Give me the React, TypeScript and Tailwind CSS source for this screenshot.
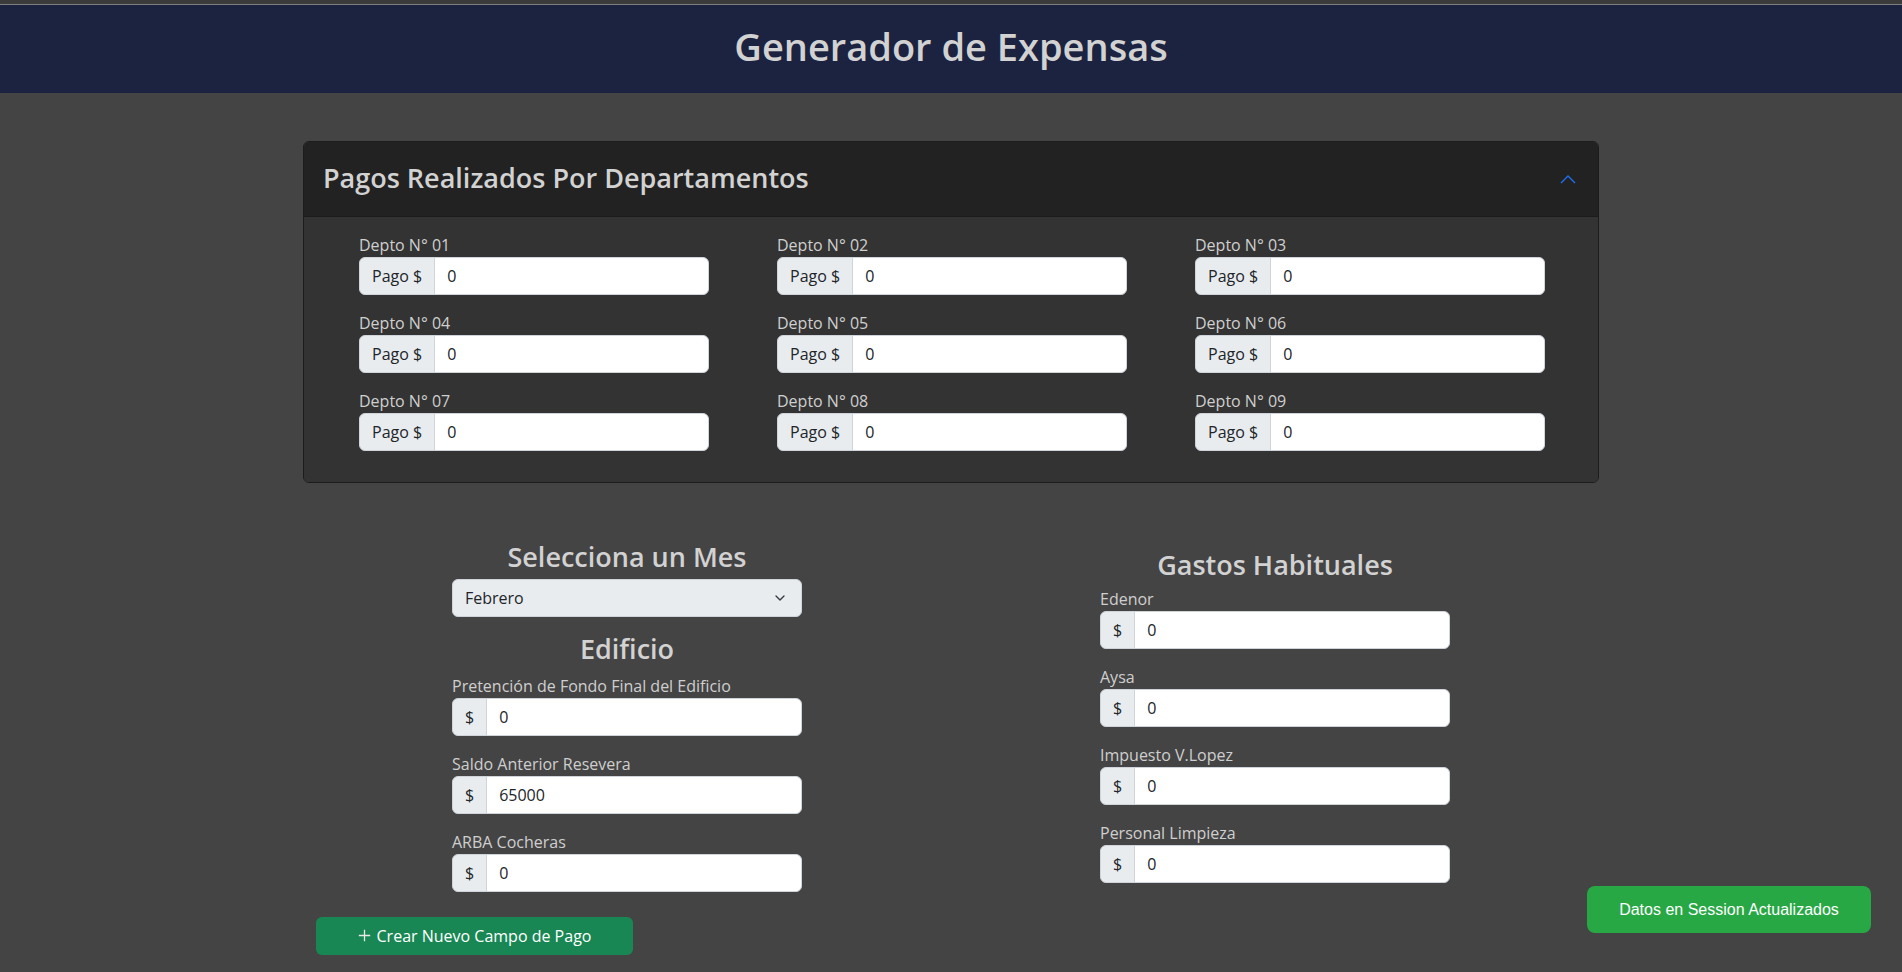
import { ChevronDown } from 'lucide-react';

const deptos = ['01', '02', '03', '04', '05', '06', '07', '08', '09'];

const edificio = [
  { label: 'Pretención de Fondo Final del Edificio', value: '0' },
  { label: 'Saldo Anterior Resevera', value: '65000' },
  { label: 'ARBA Cocheras', value: '0' },
];

const gastos = [
  { label: 'Edenor', value: '0' },
  { label: 'Aysa', value: '0' },
  { label: 'Impuesto V.Lopez', value: '0' },
  { label: 'Personal Limpieza', value: '0' },
];

const MoneyField = ({ label, value, addon }: { label: string; value: string; addon: string }) => {
  return (
    <div>
      <label className="block text-base leading-6 text-[#cfcfcf]">{label}</label>
      <div className="flex h-[38px] w-full">
        <span className="flex items-center px-3 bg-[#e9ecef] border border-[#ced4da] rounded-l-md text-base text-[#212529]">
          {addon}
        </span>
        <input
          readOnly
          value={value}
          className="flex-1 min-w-0 -ml-px px-3 bg-white border border-[#ced4da] rounded-r-md text-base text-[#212529] outline-none"
        />
      </div>
    </div>
  );
};

const App = () => {
  return (
    <div className="min-h-screen bg-[#444444] font-['Open_Sans',sans-serif]">
      <div className="h-[4px] bg-[#3b3b3b]" />
      <div className="h-px bg-[#7d7d7d]" />
      <header className="h-[88px] bg-[#1c2340] flex items-center justify-center pb-[4px]">
        <h1 className="text-[38px] font-semibold text-[#d2d2d2] leading-tight">Generador de Expensas</h1>
      </header>

      <main className="w-[1296px] mx-auto pt-[48px] pb-4">
        <section className="rounded-md border border-[#1c1c1c] overflow-hidden">
          <div className="h-[75px] bg-[#222222] pl-[19px] pr-[22px] pb-[3px] flex items-center justify-between border-b border-[#1c1c1c]">
            <h2 className="text-[27px] font-semibold text-[#d2d2d2] leading-tight">Pagos Realizados Por Departamentos</h2>
            <svg width="16" height="10" viewBox="0 0 16 10" fill="none" className="mt-[3px]">
              <polyline points="1,9 8,2 15,9" stroke="#1f6ff0" strokeWidth="1.4" />
            </svg>
          </div>
          <div className="bg-[#333333] px-5 pt-4 pb-[31px] grid grid-cols-3 gap-y-4">
            {deptos.map((n) => (
              <div key={n} className="pl-[35px] pr-[33px]">
                <MoneyField label={`Depto N° ${n}`} value="0" addon="Pago $" />
              </div>
            ))}
          </div>
        </section>

        <div className="grid grid-cols-2 mt-[58px]">
          <div className="flex flex-col items-center">
            <div className="w-[350px]">
              <h3 className="text-[27px] font-semibold leading-[1.2] text-[#d2d2d2] text-center mb-[6px]">Selecciona un Mes</h3>
              <div className="relative h-[38px] bg-[#e9ecef] border border-[#ced4da] rounded-md flex items-center pl-3 text-base text-[#212529]">
                Febrero
                <ChevronDown size={16} strokeWidth={2} className="absolute right-[13px] text-[#343a40]" />
              </div>
              <h3 className="text-[27px] font-semibold leading-[1.2] text-[#d2d2d2] text-center mt-4 mb-2">Edificio</h3>
              <div className="flex flex-col gap-4">
                {edificio.map((f) => (
                  <MoneyField key={f.label} label={f.label} value={f.value} addon="$" />
                ))}
              </div>
            </div>
          </div>
          <div className="flex flex-col items-center pt-[8px]">
            <div className="w-[350px]">
              <h3 className="text-[27px] font-semibold leading-[1.2] text-[#d2d2d2] text-center mb-[6px]">Gastos Habituales</h3>
              <div className="flex flex-col gap-4">
                {gastos.map((f) => (
                  <MoneyField key={f.label} label={f.label} value={f.value} addon="$" />
                ))}
              </div>
            </div>
          </div>
        </div>

        <div className="pl-[13px] mt-[25px]">
          <button className="w-[317px] h-[38px] bg-[#198754] rounded-md flex items-center justify-center gap-1.5 text-base text-white">
            <svg width="13" height="13" viewBox="0 0 16 16" fill="none">
              <path d="M8 1v14M1 8h14" stroke="#e8e8e8" strokeWidth="1.6" />
            </svg>
            Crear Nuevo Campo de Pago
          </button>
        </div>
      </main>

      <div className="fixed right-[31px] bottom-[39px] w-[284px] h-[47px] bg-[#28a745] rounded-lg flex items-center justify-center text-base text-white font-['Liberation_Sans',Arial,sans-serif]">
        Datos en Session Actualizados
      </div>
    </div>
  );
};

export default App;
